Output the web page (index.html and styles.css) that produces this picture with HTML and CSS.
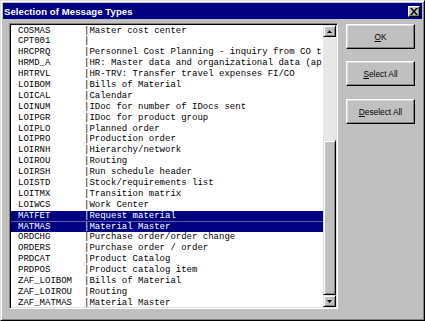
FILE: index.html
```html
<!DOCTYPE html>
<html lang="en">
<head>
    <meta charset="UTF-8">
    <title>Selection of Message Types</title>
    <link rel="stylesheet" href="styles.css">
</head>
<body>

<div class="dialog">
    <div class="titlebar">
        <span class="title">Selection of Message Types</span>
        <button class="close-button" aria-label="Close">
            <svg width="8" height="7" viewBox="0 0 8 7">
                <path d="M0 0h2l2 2.5 2-2.5h2l-3 3.5 3 3.5h-2l-2-2.5-2 2.5h-2l3-3.5z" fill="#000"/>
            </svg>
        </button>
    </div>

    <div class="content">
        <div class="listbox">
            <div class="rows">
                <div class="row"><span class="code">COSMAS</span>|Master cost center</div>
                <div class="row"><span class="code">CPT001</span>|</div>
                <div class="row"><span class="code">HRCPRQ</span>|Personnel Cost Planning - inquiry from CO t</div>
                <div class="row"><span class="code">HRMD_A</span>|HR: Master data and organizational data (ap</div>
                <div class="row"><span class="code">HRTRVL</span>|HR-TRV: Transfer travel expenses FI/CO</div>
                <div class="row"><span class="code">LOIBOM</span>|Bills of Material</div>
                <div class="row"><span class="code">LOICAL</span>|Calendar</div>
                <div class="row"><span class="code">LOINUM</span>|IDoc for number of IDocs sent</div>
                <div class="row"><span class="code">LOIPGR</span>|IDoc for product group</div>
                <div class="row"><span class="code">LOIPLO</span>|Planned order</div>
                <div class="row"><span class="code">LOIPRO</span>|Production order</div>
                <div class="row"><span class="code">LOIRNH</span>|Hierarchy/network</div>
                <div class="row"><span class="code">LOIROU</span>|Routing</div>
                <div class="row"><span class="code">LOIRSH</span>|Run schedule header</div>
                <div class="row"><span class="code">LOISTD</span>|Stock/requirements list</div>
                <div class="row"><span class="code">LOITMX</span>|Transition matrix</div>
                <div class="row"><span class="code">LOIWCS</span>|Work Center</div>
                <div class="row selected first-selected"><span class="code">MATFET</span>|Request material</div>
                <div class="row selected"><span class="code">MATMAS</span>|Material Master</div>
                <div class="row"><span class="code">ORDCHG</span>|Purchase order/order change</div>
                <div class="row"><span class="code">ORDERS</span>|Purchase order / order</div>
                <div class="row"><span class="code">PRDCAT</span>|Product Catalog</div>
                <div class="row"><span class="code">PRDPOS</span>|Product catalog item</div>
                <div class="row"><span class="code">ZAF_LOIBOM</span>|Bills of Material</div>
                <div class="row"><span class="code">ZAF_LOIROU</span>|Routing</div>
                <div class="row"><span class="code">ZAF_MATMAS</span>|Material Master</div>
            </div>
            <div class="scrollbar">
                <div class="scroll-btn">
                    <svg width="5" height="3" viewBox="0 0 5 3"><path d="M2.5 0L5 3H0z" fill="#000"/></svg>
                </div>
                <div class="track"></div>
                <div class="thumb"></div>
                <div class="scroll-btn">
                    <svg width="5" height="3" viewBox="0 0 5 3"><path d="M0 0h5L2.5 3z" fill="#000"/></svg>
                </div>
            </div>
        </div>

        <div class="buttons">
            <button class="push-button"><u>O</u>K</button>
            <button class="push-button"><u>S</u>elect All</button>
            <button class="push-button"><u>D</u>eselect All</button>
        </div>
    </div>
</div>

</body>
</html>
```

FILE: styles.css
```css
body {
    margin: 0;
    background-color: #c0c0c0;
    font-family: "Liberation Sans", Arial, sans-serif;
}
.dialog {
    width: 425px;
    height: 321px;
    box-sizing: border-box;
    background-color: #c0c0c0;
    border: 1px solid;
    border-color: #dfdfdf #000 #000 #dfdfdf;
    box-shadow: inset 1px 1px 0 #fff, inset -1px -1px 0 #808080;
    padding: 2px;
}
.titlebar {
    height: 16px;
    background-color: #000080;
    display: flex;
    align-items: center;
    justify-content: space-between;
    padding: 0 2px 0 1px;
}
.title {
    color: #fff;
    font-weight: bold;
    font-size: 9.5px;
    letter-spacing: 0.1px;
}
.close-button {
    width: 12px;
    height: 11px;
    padding: 0;
    background-color: #c0c0c0;
    border: 1px solid;
    border-color: #fff #000 #000 #fff;
    box-shadow: inset -1px -1px 0 #808080;
    display: flex;
    align-items: center;
    justify-content: center;
}
.content {
    display: flex;
    align-items: flex-start;
    padding: 4px 0 0 6px;
}
.listbox {
    width: 329px;
    height: 286px;
    box-sizing: border-box;
    display: flex;
    background-color: #fff;
    border: 1px solid;
    border-color: #808080 #fff #fff #808080;
    box-shadow: inset 1px 1px 0 #000, inset -1px -1px 0 #dfdfdf;
    padding: 1px;
}
.rows {
    flex: 1;
    overflow: hidden;
    padding-top: 0.5px;
    font-family: "Liberation Mono", "Courier New", monospace;
    font-size: 9px;
    color: #000;
}
.row {
    height: 10.9px;
    line-height: 10.9px;
    padding-left: 7px;
    white-space: nowrap;
}
.row.selected {
    background-color: #000080;
    color: #fff;
}
.row.first-selected {
    box-shadow: inset 0 -1px 0 #5a5aa8;
}
.code {
    display: inline-block;
    width: 66px;
}
.scrollbar {
    width: 13px;
    display: flex;
    flex-direction: column;
}
.scroll-btn {
    height: 12px;
    box-sizing: border-box;
    background-color: #c0c0c0;
    border: 1px solid;
    border-color: #dfdfdf #000 #000 #dfdfdf;
    box-shadow: inset 1px 1px 0 #fff, inset -1px -1px 0 #808080;
    display: flex;
    align-items: center;
    justify-content: center;
}
.track {
    height: 103px;
    background-color: #e8e8e8;
}
.thumb {
    flex: 1;
    background-color: #c0c0c0;
    border: 1px solid;
    border-color: #dfdfdf #000 #000 #dfdfdf;
    box-shadow: inset 1px 1px 0 #fff, inset -1px -1px 0 #808080;
}
.buttons {
    display: flex;
    flex-direction: column;
    gap: 12px;
    margin: 1px 0 0 8px;
}
.push-button {
    width: 69px;
    height: 25px;
    padding: 0;
    background-color: #c0c0c0;
    border: 1px solid;
    border-color: #fff #000 #000 #fff;
    box-shadow: inset -1px -1px 0 #808080, inset 1px 1px 0 #dfdfdf;
    font-family: "Liberation Sans", Arial, sans-serif;
    font-size: 8.3px;
    color: #000;
}
.push-button:nth-child(3) {
    margin-top: 1px;
}
```
